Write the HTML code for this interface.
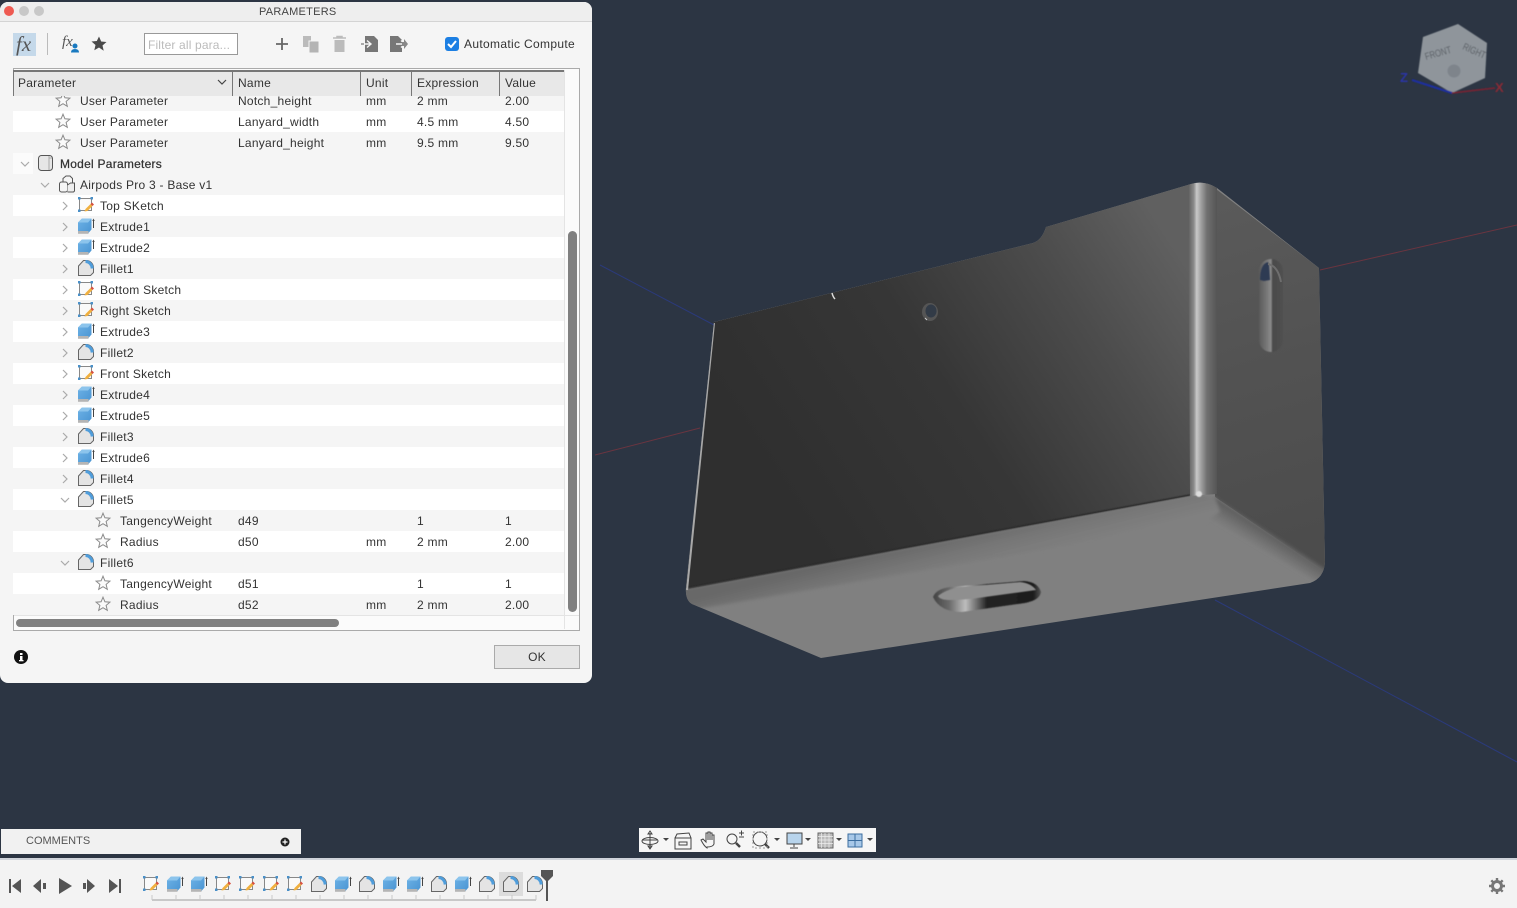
<!DOCTYPE html>
<html><head><meta charset="utf-8"><title>Parameters</title>
<style>
html,body{margin:0;padding:0}
body{width:1517px;height:908px;overflow:hidden;position:relative;background:#2c3543;font-family:"Liberation Sans",sans-serif;font-size:12px;letter-spacing:.25px;color:#333}
div,span,svg{position:absolute}
#dlg{left:0;top:2px;width:592px;height:681px;background:#f5f5f5;border-radius:8px;overflow:hidden}
#tb{left:13px;top:67px;width:565px;height:559px;border:1px solid #aaa;background:#fbfbfb}
.h{top:70px;height:24px;line-height:23px;background:#e8e8e8;border-top:2px solid #777;border-bottom:1px solid #666;border-right:2px solid #777;box-sizing:content-box;padding-left:4px}
#rows{left:13px;top:94px;width:551px;height:520px;overflow:hidden}
.r{left:0;width:551px;height:21px;line-height:23px;white-space:nowrap}
.g{background:#f5f5f5}.w{background:#fff}
.n{left:225px}.u{left:353px}.e{left:404px}.v{left:492px}
.i{width:18px;height:18px;top:1px}
.c{width:10px;height:10px;top:6px}
.b{-webkit-text-stroke:.25px #333}
</style></head><body>
<svg width="0" height="0" style="left:0;top:0"><defs>
<linearGradient id="exf" x1="0" x2="1" y1="0" y2="1"><stop offset="0" stop-color="#6db2e6"/><stop offset="1" stop-color="#4a94d2"/></linearGradient>
<symbol id="st" viewBox="0 0 18 18"><path d="M9 2.200l1.900 4.600 5 .4-3.800 3.200 1.200 4.900L9 12.700l-4.300 2.600 1.200-4.900L2.100 7.200l5-.4z" fill="#fafafa" stroke="#8a8a8a" stroke-width="1"/></symbol>
<symbol id="sk" viewBox="0 0 18 18"><path d="M2.500 2.500h12v12h-12z" fill="#fafafa" stroke="#888" stroke-width="1"/><rect x="1" y="1" width="2.500" height="2.500" fill="#4a90c8"/><rect x="13.500" y="1" width="2.500" height="2.500" fill="#4a90c8"/><rect x="1" y="13.500" width="2.500" height="2.500" fill="#4a90c8"/><path d="M7.500 15.500l1-2.500 5-5 2 2-5 5z" fill="#f0b040"/><path d="M13.500 8l1.500-1.500 2 2-1.500 1.500z" fill="#d85040"/></symbol>
<symbol id="ex" viewBox="0 0 18 18"><path d="M1 5.500L5 1.500h9.500v11l-3.500 4H1z" fill="url(#exf)"/><path d="M5 1.500h9.500L11 5.500H1z" fill="#8cc4ec"/><path d="M1 14h10.500v2.800H1z" fill="#b5b5b5"/><path d="M16.500 11V2.500" stroke="#444" stroke-width="1"/><path d="M15.300 4l1.200-2.500 1.200 2.500z" fill="#444"/></symbol>
<symbol id="fi" viewBox="0 0 18 18"><path d="M1.500 7L6.500 1.500h3C13.500 1.500 16.500 5 16.500 9v4.500L13.500 16.500H1.500z" fill="#e4e4e4" stroke="#666" stroke-width="1"/><path d="M8.500 2.500C12 2.500 15 5.500 15.200 9.500" fill="none" stroke="#4f9ddb" stroke-width="3"/></symbol>
<symbol id="cr" viewBox="0 0 10 10"><path d="M3 1l4 4-4 4" fill="none" stroke="#aaa" stroke-width="1.200"/></symbol>
<symbol id="cd" viewBox="0 0 10 10"><path d="M1 3l4 4 4-4" fill="none" stroke="#aaa" stroke-width="1.200"/></symbol>
</defs></svg>

<!-- viewport -->
<svg width="1517" height="908" style="left:0;top:0">
<defs>
<clipPath id="body"><path d="M714 322L1033 243Q1042 240 1046 227L1191 184Q1204 180 1217 188L1319 268L1325 562Q1324 578 1310 583L821 658L692 604Q685 600 686 587Z"/></clipPath>
<linearGradient id="fr" gradientUnits="userSpaceOnUse" x1="800" y1="520" x2="1190" y2="270"><stop offset="0" stop-color="#2f2f2f"/><stop offset=".42" stop-color="#363636"/><stop offset=".75" stop-color="#4c4c4c"/><stop offset="1" stop-color="#606060"/></linearGradient>
<linearGradient id="rt" gradientUnits="userSpaceOnUse" x1="1217" y1="200" x2="1320" y2="540"><stop offset="0" stop-color="#5a5a5a"/><stop offset=".5" stop-color="#525252"/><stop offset="1" stop-color="#4c4c4c"/></linearGradient>
<linearGradient id="fl" x1="0" x2="1" y1="0" y2="0"><stop offset="0" stop-color="#5c5c5c"/><stop offset=".2" stop-color="#8a8a8a"/><stop offset=".3" stop-color="#c8c8c8"/><stop offset=".45" stop-color="#a0a0a0"/><stop offset=".65" stop-color="#707070"/><stop offset="1" stop-color="#555"/></linearGradient>
<linearGradient id="bv" gradientUnits="userSpaceOnUse" x1="950" y1="535" x2="960" y2="575"><stop offset="0" stop-color="#686868"/><stop offset=".5" stop-color="#777"/><stop offset="1" stop-color="#808080"/></linearGradient>
<linearGradient id="rb" gradientUnits="userSpaceOnUse" x1="1280" y1="530" x2="1255" y2="570"><stop offset="0" stop-color="#505050"/><stop offset=".5" stop-color="#7a7a7a"/><stop offset="1" stop-color="#808080"/></linearGradient>
<linearGradient id="sl" gradientUnits="userSpaceOnUse" x1="933" y1="0" x2="1041" y2="0"><stop offset="0" stop-color="#444"/><stop offset=".15" stop-color="#6a6a6a"/><stop offset=".3" stop-color="#bdbdbd"/><stop offset=".41" stop-color="#6a6a6a"/><stop offset=".5" stop-color="#232323"/><stop offset=".93" stop-color="#1e1e1e"/><stop offset="1" stop-color="#555"/></linearGradient>
<linearGradient id="rs" x1="0" x2="1" y1="0" y2="0"><stop offset="0" stop-color="#5a5a5a"/><stop offset=".35" stop-color="#7a7a7a"/><stop offset=".5" stop-color="#8c8c8c"/><stop offset=".56" stop-color="#4a4a4a"/><stop offset="1" stop-color="#505050"/></linearGradient>
<filter id="bl"><feGaussianBlur stdDeviation=".6"/></filter>
<filter id="bl1"><feGaussianBlur stdDeviation=".4"/></filter>
<filter id="bl2"><feGaussianBlur stdDeviation="1.500"/></filter>
</defs>
<path d="M600 265L714 325" stroke="#2b3a7a" stroke-width="1"/>
<path d="M1215 600L1517 762" stroke="#2b3a7a" stroke-width="1"/>
<path d="M595 455L700 428" stroke="#6a3540" stroke-width="1"/>
<path d="M1320 270L1517 225" stroke="#6a3540" stroke-width="1"/>
<g clip-path="url(#body)">
<rect x="680" y="180" width="650" height="480" fill="#808080"/>
<!-- right face -->
<path d="M1212 186L1319 268L1326 530L1330 575L1215 497Z" fill="url(#rt)"/>
<path d="M1215 497L1330 572L1330 590L1200 512Z" fill="url(#rb)" filter="url(#bl2)"/>
<!-- bevel -->
<path d="M680 590L1195 495L1215 497L1220 512L1205 522L680 612Z" fill="url(#bv)" filter="url(#bl2)"/>
<!-- front face -->
<path d="M714 322L1033 243Q1042 240 1046 227L1191 184L1192 495L686 588Z" fill="url(#fr)"/>
<path d="M1190 495L688 588" stroke="#2a2a2a" stroke-width="1.500" fill="none" filter="url(#bl1)"/>
<!-- vertical fillet -->
<path d="M1188 180H1217V494L1190 496Z" fill="url(#fl)"/>
<ellipse cx="1199" cy="494" rx="3" ry="3" fill="#ddd" filter="url(#bl1)"/>
<path d="M714 323L687 590" stroke="#a8a8a8" stroke-width="2" fill="none"/>
</g>
<!-- right slot -->
<rect x="1259" y="259" width="24" height="93" rx="12" fill="url(#rs)" filter="url(#bl1)"/>
<path d="M1260 280q0-16 8-18l1 3 1 15-6 1z" fill="#2f3a52" filter="url(#bl1)"/>
<path d="M1272 287h11" stroke="#2e2e2e" stroke-width="2.500" filter="url(#bl1)"/>
<path d="M1268 264q10 2 13 18" stroke="#6e6e6e" stroke-width="2" fill="none"/>
<!-- hole -->
<ellipse cx="930" cy="312" rx="8" ry="9" fill="#555"/>
<ellipse cx="931" cy="311" rx="5.500" ry="6.500" fill="#2f3846" opacity=".9"/>
<path d="M925 318l2 2" stroke="#ccc"/>
<path d="M832 293q1 4 3 6" stroke="#ddd" stroke-width="1.500" fill="none"/>
<!-- bottom slot -->
<path d="M933 597Q936 589 950 587L1024 581Q1038 582 1041 592Q1040 600 1025 603L962 612Q940 612 933 597Z" fill="url(#sl)" filter="url(#bl1)"/>
<path d="M938 596Q945 590 960 587L1020 582Q1031 583 1036 590L985 597Q965 600 950 600Q940 600 938 596Z" fill="#8f8f8f" filter="url(#bl1)"/>
<!-- viewcube -->
<g filter="url(#bl1)">
<path d="M1458 24L1423 37L1418 73L1452 93L1485 78L1487 43Z" fill="#8f959b"/>
<circle cx="1454" cy="71" r="6.500" fill="#7e848b"/>
<text x="0" y="0" transform="translate(1426,60) rotate(-16)" font-family="Liberation Sans" font-size="10" fill="#585d64" letter-spacing="0" textLength="27" lengthAdjust="spacingAndGlyphs">FRONT</text>
<text x="0" y="0" transform="translate(1462,49) rotate(24)" font-family="Liberation Sans" font-size="10" fill="#585d64" letter-spacing="0" textLength="24" lengthAdjust="spacingAndGlyphs">RIGHT</text>
<path d="M1412 80L1452 93" stroke="#1f2fa0" stroke-width="2"/>
<path d="M1452 93L1495 88" stroke="#7c2030" stroke-width="1.500"/>
<text x="1400" y="82" font-family="Liberation Sans" font-size="13" font-weight="bold" fill="#2a35a5" letter-spacing="0">Z</text>
<text x="1495" y="92" font-family="Liberation Sans" font-size="13" font-weight="bold" fill="#8a2a35" letter-spacing="0">X</text>
</g>
</svg>

<!-- dialog -->
<div id="dlg" style="position:absolute"></div>
<div style="left:0;top:21px;width:592px;height:1px;background:#d4d4d4"></div>
<div style="left:0;top:2px;width:592px;height:19px;background:#eeeeee;border-radius:8px 8px 0 0"></div>
<div style="left:4px;top:6px;width:10px;height:10px;border-radius:5px;background:#ee5a52"></div>
<div style="left:19px;top:6px;width:10px;height:10px;border-radius:5px;background:#c8c8c8"></div>
<div style="left:34px;top:6px;width:10px;height:10px;border-radius:5px;background:#c8c8c8"></div>
<div style="left:259px;top:5px;line-height:14px;font-size:11px;color:#444">PARAMETERS</div>

<div style="left:13px;top:33px;width:23px;height:23px;background:#c5d9ea"></div>
<div style="left:16px;top:32px;font:italic 21px 'Liberation Serif',serif;color:#555;letter-spacing:0">fx</div>
<div style="left:47px;top:33px;width:1px;height:22px;background:#bbb"></div>
<div style="left:62px;top:34px;font:italic 15px 'Liberation Serif',serif;color:#555;letter-spacing:0">fx</div>
<svg width="10" height="10" style="left:70px;top:43px"><circle cx="5" cy="3" r="2.500" fill="#1a7ac0"/><path d="M1 9.500q0-3.500 4-3.500t4 3.500z" fill="#1a7ac0"/></svg>
<svg width="16" height="16" style="left:91px;top:36px"><path d="M8 .5l2.200 5 5.300.5-4 3.500 1.200 5.300L8 11.500l-4.700 2.800 1.200-5.300-4-3.500 5.300-.5z" fill="#4a4a4a"/></svg>
<div style="left:144px;top:33px;height:20px;border:1px solid #999;background:#fff;color:#bbb;line-height:22px;padding-left:3px;box-sizing:content-box;width:89px;letter-spacing:.15px">Filter all para...</div>
<svg width="14" height="14" style="left:275px;top:37px"><path d="M7 1v12M1 7h12" stroke="#666" stroke-width="1.800"/></svg>
<svg width="18" height="18" style="left:302px;top:35px"><path d="M1 1h8v11H1z" fill="#bbb"/><path d="M7 6h10v12H7z" fill="#b4b4b4" stroke="#f5f5f5"/></svg>
<svg width="16" height="18" style="left:332px;top:35px"><path d="M1 3h13M5 3V1.500h5V3" stroke="#bbb" stroke-width="1.500" fill="none"/><path d="M2.500 5h10v12h-10z" fill="#bbb"/></svg>
<svg width="18" height="18" style="left:361px;top:35px"><path d="M4 1h9l4 4v12H4z" fill="#777"/><path d="M0 9h9M6 5.500L10 9l-4 3.500" stroke="#f5f5f5" stroke-width="1.400" fill="none"/><path d="M0 9h3" stroke="#888" stroke-width="1.400"/></svg>
<svg width="18" height="18" style="left:390px;top:35px"><path d="M0 1h8l4 4v12H0z" fill="#777"/><path d="M6 9h8M11 5.500L15 9l-4 3.500" stroke="#f5f5f5" stroke-width="1.400" fill="none"/><path d="M12 7h2V4l4 5-4 5v-3h-2z" fill="#888"/></svg>
<div style="left:445px;top:37px;width:14px;height:14px;background:#1c7fe3;border-radius:3px"></div>
<svg width="14" height="14" style="left:445px;top:37px"><path d="M3 7l3 3 5-6" stroke="#fff" stroke-width="2" fill="none"/></svg>
<div style="left:464px;top:36px;line-height:16px;white-space:nowrap;letter-spacing:.33px">Automatic Compute</div>

<!-- table -->
<div id="tb" style="box-sizing:content-box;top:68px;height:561px"></div>
<div class="h" style="left:13px;width:214px;border-left:1px solid #777">Parameter</div>
<svg width="10" height="10" style="left:217px;top:77px"><path d="M1 3l4 4 4-4" fill="none" stroke="#444" stroke-width="1.200"/></svg>
<div class="h" style="left:233px;width:122px;padding-left:5px">Name</div>
<div class="h" style="left:361px;width:45px;padding-left:5px">Unit</div>
<div class="h" style="left:412px;width:82px;padding-left:5px">Expression</div>
<div class="h" style="left:500px;width:59px;border-right:0;padding-left:5px">Value</div>

<div id="rows" style="top:96px">
<div class="r g" style="top:-6px"><svg class="i" style="left:41px"><use href="#st"/></svg><span style="left:67px">User Parameter</span><span class="n">Notch_height</span><span class="u">mm</span><span class="e">2 mm</span><span class="v">2.00</span></div>
<div class="r w" style="top:15px"><svg class="i" style="left:41px"><use href="#st"/></svg><span style="left:67px">User Parameter</span><span class="n">Lanyard_width</span><span class="u">mm</span><span class="e">4.5 mm</span><span class="v">4.50</span></div>
<div class="r g" style="top:36px"><svg class="i" style="left:41px"><use href="#st"/></svg><span style="left:67px">User Parameter</span><span class="n">Lanyard_height</span><span class="u">mm</span><span class="e">9.5 mm</span><span class="v">9.50</span></div>
<div class="r g" style="top:57px"><div style="left:0;top:0;width:20px;height:21px;background:#fbfbfb"></div><svg class="c" style="left:7px"><use href="#cd"/></svg><svg width="18" height="18" style="left:23px;top:1px"><rect x="2.500" y="1.500" width="14" height="15" rx="3" fill="#e6e6e6" stroke="#555"/><path d="M13 2v14M13 4h3" stroke="#aaa" fill="none"/></svg><span class="b" style="left:47px">Model Parameters</span></div>
<div class="r g" style="top:78px"><svg class="c" style="left:27px"><use href="#cd"/></svg><svg width="18" height="18" style="left:45px;top:1px"><path d="M5 7V3.500L8 1h4l2.500 2.500V8" fill="#f5f5f5" stroke="#555"/><rect x="1.500" y="7" width="8" height="10" rx="2" fill="#f5f5f5" stroke="#555"/><path d="M9.500 10l3-2h4v8l-1 1h-6" fill="#eee" stroke="#555"/></svg><span style="left:67px">Airpods Pro 3 - Base v1</span></div>
<div class="r w" style="top:99px"><svg class="c" style="left:47px"><use href="#cr"/></svg><svg class="i" style="left:64px"><use href="#sk"/></svg><span style="left:87px">Top SKetch</span></div>
<div class="r g" style="top:120px"><svg class="c" style="left:47px"><use href="#cr"/></svg><svg class="i" style="left:64px"><use href="#ex"/></svg><span style="left:87px">Extrude1</span></div>
<div class="r w" style="top:141px"><svg class="c" style="left:47px"><use href="#cr"/></svg><svg class="i" style="left:64px"><use href="#ex"/></svg><span style="left:87px">Extrude2</span></div>
<div class="r g" style="top:162px"><svg class="c" style="left:47px"><use href="#cr"/></svg><svg class="i" style="left:64px"><use href="#fi"/></svg><span style="left:87px">Fillet1</span></div>
<div class="r w" style="top:183px"><svg class="c" style="left:47px"><use href="#cr"/></svg><svg class="i" style="left:64px"><use href="#sk"/></svg><span style="left:87px">Bottom Sketch</span></div>
<div class="r g" style="top:204px"><svg class="c" style="left:47px"><use href="#cr"/></svg><svg class="i" style="left:64px"><use href="#sk"/></svg><span style="left:87px">Right Sketch</span></div>
<div class="r w" style="top:225px"><svg class="c" style="left:47px"><use href="#cr"/></svg><svg class="i" style="left:64px"><use href="#ex"/></svg><span style="left:87px">Extrude3</span></div>
<div class="r g" style="top:246px"><svg class="c" style="left:47px"><use href="#cr"/></svg><svg class="i" style="left:64px"><use href="#fi"/></svg><span style="left:87px">Fillet2</span></div>
<div class="r w" style="top:267px"><svg class="c" style="left:47px"><use href="#cr"/></svg><svg class="i" style="left:64px"><use href="#sk"/></svg><span style="left:87px">Front Sketch</span></div>
<div class="r g" style="top:288px"><svg class="c" style="left:47px"><use href="#cr"/></svg><svg class="i" style="left:64px"><use href="#ex"/></svg><span style="left:87px">Extrude4</span></div>
<div class="r w" style="top:309px"><svg class="c" style="left:47px"><use href="#cr"/></svg><svg class="i" style="left:64px"><use href="#ex"/></svg><span style="left:87px">Extrude5</span></div>
<div class="r g" style="top:330px"><svg class="c" style="left:47px"><use href="#cr"/></svg><svg class="i" style="left:64px"><use href="#fi"/></svg><span style="left:87px">Fillet3</span></div>
<div class="r w" style="top:351px"><svg class="c" style="left:47px"><use href="#cr"/></svg><svg class="i" style="left:64px"><use href="#ex"/></svg><span style="left:87px">Extrude6</span></div>
<div class="r g" style="top:372px"><svg class="c" style="left:47px"><use href="#cr"/></svg><svg class="i" style="left:64px"><use href="#fi"/></svg><span style="left:87px">Fillet4</span></div>
<div class="r w" style="top:393px"><svg class="c" style="left:47px"><use href="#cd"/></svg><svg class="i" style="left:64px"><use href="#fi"/></svg><span style="left:87px">Fillet5</span></div>
<div class="r g" style="top:414px"><svg class="i" style="left:81px"><use href="#st"/></svg><span style="left:107px">TangencyWeight</span><span class="n">d49</span><span class="e">1</span><span class="v">1</span></div>
<div class="r w" style="top:435px"><svg class="i" style="left:81px"><use href="#st"/></svg><span style="left:107px">Radius</span><span class="n">d50</span><span class="u">mm</span><span class="e">2 mm</span><span class="v">2.00</span></div>
<div class="r g" style="top:456px"><svg class="c" style="left:47px"><use href="#cd"/></svg><svg class="i" style="left:64px"><use href="#fi"/></svg><span style="left:87px">Fillet6</span></div>
<div class="r w" style="top:477px"><svg class="i" style="left:81px"><use href="#st"/></svg><span style="left:107px">TangencyWeight</span><span class="n">d51</span><span class="e">1</span><span class="v">1</span></div>
<div class="r g" style="top:498px"><svg class="i" style="left:81px"><use href="#st"/></svg><span style="left:107px">Radius</span><span class="n">d52</span><span class="u">mm</span><span class="e">2 mm</span><span class="v">2.00</span></div>
</div>
<div style="left:14px;top:615px;width:565px;height:1px;background:#e4e4e4"></div>
<div style="left:564px;top:70px;width:1px;height:559px;background:#e4e4e4"></div>
<div style="left:568px;top:231px;width:9px;height:381px;border-radius:5px;background:#808080"></div>
<div style="left:16px;top:619px;width:323px;height:8px;border-radius:4px;background:#808080"></div>
<svg width="14" height="14" style="left:14px;top:650px"><circle cx="7" cy="7" r="7" fill="#111"/><rect x="6" y="6" width="2.500" height="5" fill="#fff"/><rect x="5" y="10" width="4.500" height="1.300" fill="#fff"/><rect x="6" y="3" width="2.500" height="2" fill="#fff"/></svg>
<div style="left:494px;top:645px;width:84px;height:22px;border:1px solid #aaa;background:#e6e6e6;line-height:23px;text-align:center">OK</div>

<!-- comments -->
<div style="left:1px;top:829px;width:300px;height:25px;background:#f1f1f1"></div>
<div style="left:26px;top:834px;line-height:15px;font-size:11px;letter-spacing:0;color:#555">COMMENTS</div>
<svg width="10" height="10" style="left:280px;top:837px"><circle cx="5" cy="5" r="4.500" fill="#222"/><path d="M5 2.500v5M2.500 5h5" stroke="#fff" stroke-width="1.200"/></svg>

<!-- nav bar -->
<div style="left:639px;top:828px;width:237px;height:24px;background:#f6f6f6"></div>
<svg width="237" height="24" style="left:639px;top:828px" fill="none" stroke="#444">
<path d="M11 5v15M3 12h15M11 3l-2 3h4zM11 21l-2-3h4z" stroke-width="1"/><ellipse cx="11" cy="13" rx="8" ry="3.500"/>
<path d="M24 10h6l-3 3z" fill="#444" stroke="none"/>
<path d="M36 10h16v11H36zM36 10l2-4 12-1 2 5M40 14h8v3h-8z"/>
<path d="M68 20q-3-2-6-8l2-1 3 3 0-9h2v7-8h2v8-7h2v7-5h2v9q-1 3-7 3z"/>
<circle cx="93" cy="11" r="5"/><path d="M97 15l4 4" stroke-width="2.500"/><path d="M100 5h5M102.500 2.500v5M100 9h5"/>
<circle cx="121" cy="11" r="7"/><path d="M126 16l4 4" stroke-width="2.500"/><path d="M114 4h14v16h-14z" stroke-dasharray="2 2" stroke="#999"/>
<path d="M135 10h6l-3 3z" fill="#444" stroke="none"/>
<rect x="148" y="5" width="15" height="11" fill="#b8d4ec"/><path d="M155 16v3M151 20h8"/>
<path d="M166 10h6l-3 3z" fill="#444" stroke="none"/>
<rect x="179" y="5" width="15" height="15" fill="#bbb" stroke="#666"/><path d="M179 8.500h15M179 12h15M179 15.500h15M182.500 5v15M186 5v15M190 5v15" stroke="#eee" stroke-width=".7"/>
<path d="M197 10h6l-3 3z" fill="#444" stroke="none"/>
<rect x="209" y="6" width="14" height="13" fill="#a8c8e8" stroke="#3c6ea0"/><path d="M209 12.500h14M216 6v13" stroke="#3c6ea0"/>
<path d="M228 10h6l-3 3z" fill="#444" stroke="none"/>
</svg>

<!-- timeline -->
<div style="left:0;top:858px;width:1517px;height:50px;background:#f3f3f3;border-top:2px solid #cfd3da;box-sizing:border-box"></div>
<svg width="130" height="20" style="left:0;top:876px" fill="#555">
<path d="M9 3h2v14H9zM21 3L12 10l9 7z"/>
<path d="M33 10l8-7v14zM43 7h3v6h-3z"/>
<path d="M59 2l13 8-13 8z"/>
<path d="M83 7h3v6h-3zM87 3l8 7-8 7z"/>
<path d="M109 3l9 7-9 7zM119 3h2v14h-2z"/>
</svg>
<div style="left:499px;top:872px;width:24px;height:24px;background:#dcdcdc"></div>
<svg class="i" style="left:142px;top:875px"><use href="#sk"/></svg>
<svg class="i" style="left:166px;top:875px"><use href="#ex"/></svg>
<svg class="i" style="left:190px;top:875px"><use href="#ex"/></svg>
<svg class="i" style="left:214px;top:875px"><use href="#sk"/></svg>
<svg class="i" style="left:238px;top:875px"><use href="#sk"/></svg>
<svg class="i" style="left:262px;top:875px"><use href="#sk"/></svg>
<svg class="i" style="left:286px;top:875px"><use href="#sk"/></svg>
<svg class="i" style="left:310px;top:875px"><use href="#fi"/></svg>
<svg class="i" style="left:334px;top:875px"><use href="#ex"/></svg>
<svg class="i" style="left:358px;top:875px"><use href="#fi"/></svg>
<svg class="i" style="left:382px;top:875px"><use href="#ex"/></svg>
<svg class="i" style="left:406px;top:875px"><use href="#ex"/></svg>
<svg class="i" style="left:430px;top:875px"><use href="#fi"/></svg>
<svg class="i" style="left:454px;top:875px"><use href="#ex"/></svg>
<svg class="i" style="left:478px;top:875px"><use href="#fi"/></svg>
<svg class="i" style="left:502px;top:875px"><use href="#fi"/></svg>
<svg class="i" style="left:526px;top:875px"><use href="#fi"/></svg>
<svg width="420" height="40" style="left:140px;top:868px">
<path d="M12 32H396" stroke="#c8c8c8" stroke-width="2"/>
<path d="M12 27v5M36 27v5M60 27v5M84 27v5M108 27v5M132 27v5M156 27v5M180 27v5M204 27v5M228 27v5M252 27v5M276 27v5M300 27v5M324 27v5M348 27v5M372 27v5M396 27v5" stroke="#c8c8c8"/>
<path d="M401 2h12v6l-6 6-6-6z" fill="#555"/><path d="M407 8v25" stroke="#555" stroke-width="2"/>
</svg>
<svg width="18" height="18" style="left:1488px;top:877px"><circle cx="9" cy="9" r="4.500" fill="none" stroke="#777" stroke-width="3"/><path d="M9 1v3.500M9 13.500V17M1 9h3.500M13.500 9H17M3.300 3.300l2.500 2.500M12.200 12.200l2.500 2.500M3.300 14.700l2.500-2.500M12.200 5.800l2.500-2.500" stroke="#777" stroke-width="2.400"/></svg>
</body></html>
